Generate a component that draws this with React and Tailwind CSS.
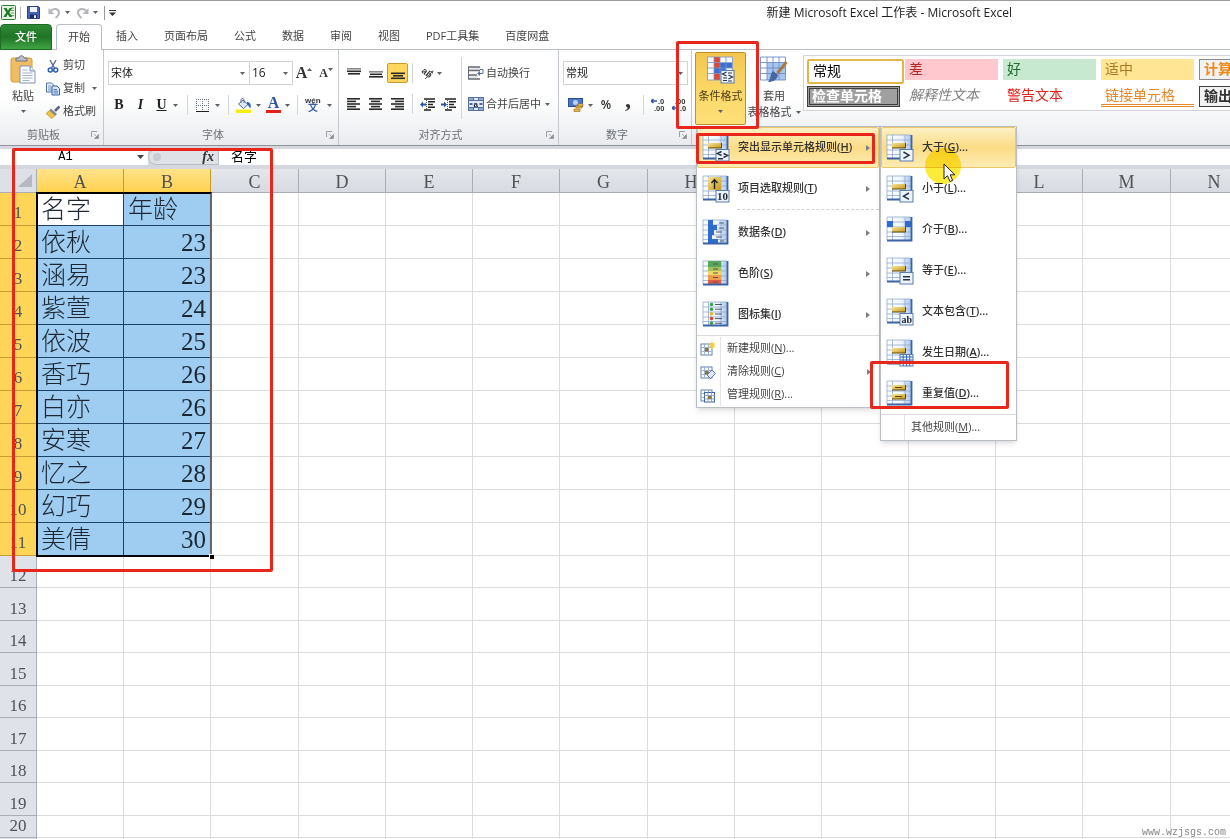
import React, { useState } from 'react';
import clsx from 'clsx';

const people = [
    ['依秋', 23],
    ['涵易', 23],
    ['紫萱', 24],
    ['依波', 25],
    ['香巧', 26],
    ['白亦', 26],
    ['安寒', 27],
    ['忆之', 28],
    ['幻巧', 29],
    ['美倩', 30],
];

const columns = 'ABCDEFGHIJKLMNOPQRST'.split('');
const wideColumns = ['C', 'G', 'M'];
const rowCount = 40;
const tabs = ['插入', '页面布局', '公式', '数据', '审阅', '视图', 'PDF工具集', '百度网盘'];

/* ---------- small shared pieces ---------- */

function Caret({ className }) {
    return (
        <svg viewBox="0 0 5 3" className={clsx('w-[5px] h-[3px] shrink-0', className)} aria-hidden="true">
            <path d="M0 0h5L2.5 3z" fill="#5c5f66" />
        </svg>
    );
}

function Divider() {
    return <span className="w-px h-5 mx-1 bg-[#d3d6db] shrink-0" />;
}

function Launcher() {
    return (
        <button type="button" aria-label="更多" className="w-2 h-2">
            <svg viewBox="0 0 8 8" className="w-2 h-2">
                <path d="M.5 6V.5H6" fill="none" stroke="#9a9ea6" />
                <path d="M3 3l3 3M7.5 3.500v4h-4z" fill="#8b9099" stroke="#8b9099" strokeWidth=".7" />
            </svg>
        </button>
    );
}

function Group({ label, className, children }) {
    return (
        <section className={clsx('flex flex-col shrink-0 border-r border-[#c5c9cf]', className)}>
            <div className="flex-1">{children}</div>
            <div className="flex items-center h-[22px] pr-1 pt-0.5 text-[#6d7178]">
                <span className="flex-1 pr-1 text-center">{label}</span>
                <Launcher />
            </div>
        </section>
    );
}

function Combo({ label, value, className }) {
    return (
        <label className={clsx('flex items-center h-6 border border-[#d0d3d8] bg-white', className)}>
            <select aria-label={label} defaultValue={value} className="flex-1 min-w-0 h-full pl-0.5 appearance-none outline-none text-[#222]">
                <option>{value}</option>
            </select>
            <Caret className="mr-1" />
        </label>
    );
}

function Tool({ label, className, children }) {
    return (
        <button type="button" aria-label={label} className={clsx('flex items-center justify-center h-5 shrink-0', className)}>
            {children}
        </button>
    );
}

/* ---------- ribbon icons ---------- */

function Lines({ rows }) {
    return (
        <svg viewBox="0 0 14 13" className="w-[14px] h-[13px]" aria-hidden="true">
            {rows.map(([x, y, w, color]) => (
                <rect key={y} x={x} y={y} width={w} height="1.6" fill={color || '#2b2b2b'} />
            ))}
        </svg>
    );
}

const vTop = [[0, 1, 14, '#888'], [0, 3.500, 14], [1, 6, 12]];
const vMiddle = [[0, 4, 14, '#888'], [1, 6.5, 12], [0, 9, 14]];
const vBottom = [[0, 5.500, 14], [2, 8, 10], [0, 10.500, 14]];
const hLeft = [[0, 0, 13], [0, 2.6, 9], [0, 5.2, 13], [0, 7.8, 9], [0, 10.4, 13]];
const hCenter = [[0, 0, 13], [2, 2.6, 9], [0, 5.2, 13], [2, 7.8, 9], [0, 10.4, 13]];
const hRight = [[0, 0, 13], [4, 2.6, 9], [0, 5.2, 13], [4, 7.8, 9], [0, 10.4, 13]];

function ExcelLogo() {
    return (
        <svg viewBox="0 0 15 15" className="w-[15px] h-[15px]">
            <rect x=".5" y=".5" width="14" height="14" rx="1" fill="#e4f1df" stroke="#2f7d32" />
            <path d="M10 3h3M10 5.500h3M10 8h3M10 10.500h3" stroke="#6aa868" />
            <path d="M2.500 3h3l1.500 2.800L8.600 3h2.700L8.400 7.400l3 4.600H8.500L6.800 9.200 5.200 12H2.300l3-4.500z" fill="#1f7a2b" />
        </svg>
    );
}

function SaveIcon() {
    return (
        <svg viewBox="0 0 13 13" className="w-[13px] h-[13px]">
            <path d="M.5.5h11l1 1v11H.5z" fill="#4763b8" stroke="#2c3f8c" />
            <path d="M3 1h7v5H3z" fill="#eef3fb" />
            <path d="M3 8.500h7V12H3z" fill="#1f2b5e" />
            <path d="M7 9.300h2V12H7z" fill="#e8edf8" />
        </svg>
    );
}

function UndoIcon({ flip }) {
    return (
        <svg viewBox="0 0 13 12" className={clsx('w-[13px] h-3', flip && '-scale-x-100')}>
            <path d="M2 4.500C5 .5 11 1.500 11 5.500c0 2.500-1.500 4-3.500 5.500" fill="none" stroke="#b4b6ba" strokeWidth="2" />
            <path d="M.5 1v6h6z" fill="#b4b6ba" />
        </svg>
    );
}

function PasteIcon() {
    return (
        <svg viewBox="0 0 26 29" className="w-[26px] h-[29px]">
            <rect x="1" y="3" width="21" height="24" rx="2" fill="#f0bd62" stroke="#d79a3c" />
            <path d="M6 6V3h3c0-3 5-3 5 0h3v3z" fill="#b9bec7" stroke="#70757e" />
            <path d="M10 11h10l5 5v12H10z" fill="#f8fbff" stroke="#8093b3" />
            <path d="M20 11v5h5" fill="#dce6f5" stroke="#8093b3" />
            <path d="M12.500 15h5M12.500 18h10M12.500 20.500h10M12.500 23h10M12.500 25.500h7" stroke="#a3b4cf" />
        </svg>
    );
}

function CutIcon() {
    return (
        <svg viewBox="0 0 14 14" className="w-[14px] h-[14px]">
            <path d="M4 1l4.500 8M10 1L5.500 9" stroke="#5c6f91" strokeWidth="1.500" />
            <circle cx="4.300" cy="11" r="2" fill="none" stroke="#2f5fb0" strokeWidth="1.500" />
            <circle cx="9.700" cy="11" r="2" fill="none" stroke="#2f5fb0" strokeWidth="1.500" />
        </svg>
    );
}

function CopyIcon() {
    return (
        <svg viewBox="0 0 14 14" className="w-[14px] h-[14px]">
            <path d="M.5 1h5l2.500 2.500V10H.5z" fill="#eef4fd" stroke="#4c6fae" />
            <path d="M2 4h3M2 6h4M2 8h4" stroke="#6c8dc5" />
            <path d="M6 4h5l2.500 2.500V13H6z" fill="#dbe8fa" stroke="#3560a8" />
            <path d="M7.500 7.500H11M7.500 9.200H12M7.500 11H12" stroke="#4d78bd" />
        </svg>
    );
}

function BrushIcon() {
    return (
        <svg viewBox="0 0 14 14" className="w-[14px] h-[14px]">
            <path d="M13.500 1.500L9 6" stroke="#5b6680" strokeWidth="2.600" />
            <path d="M5 3.500l6 5.500-2 2-6-5z" fill="#7d8aa6" />
            <path d="M3.500 5.500l5.500 5-3 3L0 8.500z" fill="#f0c648" stroke="#b98d25" strokeWidth=".7" />
        </svg>
    );
}

function BordersIcon() {
    return (
        <svg viewBox="0 0 13 13" className="w-[13px] h-[13px]">
            <path d="M.5 0v12M6.500 0v12M12.500 0v12M0 .5h13M0 6.500h13" stroke="#70747c" strokeDasharray="1 1" />
            <path d="M0 12.500h13" stroke="#222" />
        </svg>
    );
}

function FillIcon() {
    return (
        <svg viewBox="0 0 16 15" className="w-4 h-[15px]">
            <path d="M7 2l5 4.500L7.500 10.500 2.500 6z" fill="#dfe8f7" stroke="#5a6b8c" />
            <path d="M5 5V2c0-2 3-2 3 0v3" fill="none" stroke="#5a6b8c" />
            <path d="M11 4c3 0 4.500 2.500 3.500 6.500-1.500-1-1.500-3-3.500-4z" fill="#2f62b8" />
            <rect x="0" y="11.500" width="15" height="3.500" fill="#f7ec13" />
        </svg>
    );
}

function WrapIcon() {
    return (
        <svg viewBox="0 0 16 14" className="w-4 h-[14px]">
            <path d="M1 1h11v4H1zM1 9h9v4H1z" fill="#e6e8ec" />
            <path d="M0 1h12M0 4.500h12M0 9h9M0 13h12" stroke="#666b74" strokeWidth="1.400" />
            <path d="M.5 1v12" stroke="#666b74" />
            <path d="M12 3.500h3v4h-3.500" fill="none" stroke="#5370ab" />
            <path d="M9 7.500l3-2.500v5z" fill="#5370ab" />
        </svg>
    );
}

function MergeIcon() {
    return (
        <svg viewBox="0 0 16 14" className="w-4 h-[14px]">
            <rect x=".5" y=".5" width="15" height="13" fill="#dfe9f8" stroke="#5a7199" />
            <path d="M1 1h4.500v2.500H1zM10.500 1H15v2.500h-4.500zM1 10.500h4.500V13H1zM10.500 10.500H15V13h-4.500z" fill="#8fa8d0" />
            <path d="M.5 3.500h15M.5 10.500h15M5.500.5v3M10.500.5v3M5.500 10.500v3M10.500 10.500v3" stroke="#5a7199" />
            <path d="M1.500 7h3M11.500 7h3" stroke="#1f3f86" strokeWidth="1.500" />
            <text x="5.500" y="9.500" fontSize="8" fontWeight="bold" fontFamily="Liberation Sans, sans-serif" fill="#223">a</text>
        </svg>
    );
}

function IndentIcon({ inward }) {
    return (
        <svg viewBox="0 0 15 13" className="w-[15px] h-[13px]">
            <path d="M4 1h11M8 3.800h7M8 6.500h5M8 9.200h7M4 12h7" stroke="#222" strokeWidth="1.600" />
            <path d="M6.500 0v13" stroke="#555" strokeDasharray="1 1" />
            <path d={inward ? 'M0 5.500h3V3.500l3 3-3 3v-2H0z' : 'M6 5.500H3V3.500l-3 3 3 3v-2h3z'} fill="#2c56a8" />
        </svg>
    );
}

function OrientIcon() {
    return (
        <svg viewBox="0 0 15 14" className="w-[15px] h-[14px]">
            <text x="1" y="8" fontSize="9" fontFamily="Liberation Sans, sans-serif" fontWeight="bold" fill="#333" transform="rotate(40 4 7)">ab</text>
            <path d="M5 13l7-7" stroke="#555" />
            <path d="M13.500 4.500l-3.500 1 2.500 2.500z" fill="#555" />
        </svg>
    );
}

function MoneyIcon() {
    return (
        <svg viewBox="0 0 16 16" className="w-4 h-4">
            <rect x=".5" y="1.500" width="14" height="8" fill="#4c78c6" stroke="#2c4f96" />
            <ellipse cx="7.500" cy="5.500" rx="2.500" ry="2.500" fill="#bcd1f2" />
            <path d="M8 9h6v2H8zM6 12h6v2.500H6z" fill="#e9b54c" stroke="#a8761e" strokeWidth=".7" />
            <path d="M10 7h5v2h-5z" fill="#f2cb6d" stroke="#a8761e" strokeWidth=".7" />
        </svg>
    );
}

function DecimalIcon({ less }) {
    return (
        <svg viewBox="0 0 16 14" className="w-4 h-[14px]" fontFamily="Liberation Sans, sans-serif" fontWeight="bold" fontSize="7.500">
            <path d={less ? 'M0 10h6M0 10l2.500-2M0 10l2.500 2' : 'M6 3H0M0 3l2.500-2M0 3l2.500 2'} stroke="#2c56a8" strokeWidth="1.400" />
            <text x={less ? 3 : 7} y="6" fill="#333">{less ? '.00' : '.0'}</text>
            <text x={less ? 8 : 3} y="13" fill="#333">{less ? '.0' : '.00'}</text>
        </svg>
    );
}

/* ---------- menu icons, all built on the same little sheet ---------- */

function Sheet({ children, badge }) {
    return (
        <svg viewBox="0 0 28 28" className="w-7 h-7 shrink-0" aria-hidden="true">
            <defs>
                <linearGradient id="sheetEdge" x1="0" x2="1">
                    <stop offset="0" stopColor="#ffffff" />
                    <stop offset="0.6" stopColor="#f0f5fd" />
                    <stop offset="1" stopColor="#a9c6ef" />
                </linearGradient>
                <linearGradient id="gold" x1="0" x2="1" y2="1">
                    <stop offset="0" stopColor="#f6e39a" />
                    <stop offset="1" stopColor="#c99a1c" />
                </linearGradient>
            </defs>
            <rect x="1" y="1" width="24" height="23" fill="url(#sheetEdge)" />
            <path d="M1 6h24M1 11h24M1 16h24M1 20.500h24M6.500 1v23M19 1v23M1 1v23M1 1h24" stroke="#93aacb" strokeWidth=".8" />
            {children}
            <path d="M25.500 1v23.500H1" fill="none" stroke="#3c63a6" strokeWidth="1.800" />
            {badge && (
                <g>
                    <rect x="14" y="15.500" width="13" height="11.500" fill="#eef4fc" stroke="#5b7cb0" />
                    {badge}
                </g>
            )}
        </svg>
    );
}

function GoldBar({ y = 9 }) {
    return (
        <g>
            <path d={`M6 ${y}h13v5H6z`} fill="url(#gold)" />
            <path d={`M6 ${y + 5}h13.500V${y}`} fill="none" stroke="#5d4a12" />
        </g>
    );
}

function Sign({ d }) {
    return <path d={d} fill="none" stroke="#26324c" strokeWidth="1.500" />;
}

const signs = {
    both: 'M19.500 17.500l-4 2 4 2M21.500 19.500l4 2-4 2M16 24.700h5',
    greater: 'M17.500 18l5.500 3.200-5.500 3.200',
    less: 'M23 18l-5.500 3.200L23 24.400',
    equal: 'M17 19.700h7M17 22.800h7',
};

const TopIcon = () => (
    <Sheet badge={<text x="15" y="25" fontSize="11" fontWeight="bold" fontFamily="Liberation Serif, serif" fill="#1d2435">10</text>}>
        <path d="M6 2h13v13H6z" fill="url(#gold)" />
        <path d="M12.500 14V5M9.500 8l3-3.500 3 3.500" fill="none" stroke="#222" strokeWidth="1.400" />
    </Sheet>
);

const BarsIcon = () => (
    <Sheet>
        <path d="M6 1h5v5h-5zM6 6h9v5H6zM6 11h6v5H6zM6 16h4v4H6zM6 20h10v4H6z" fill="#2f6cd0" />
        <path d="M17 4h5M17 9h5M14 13h6M14 18h6M18 22h4" stroke="#4d5a70" />
    </Sheet>
);

const ScaleIcon = () => (
    <Sheet>
        <rect x="6" y="1" width="13" height="6" fill="#5aa55c" />
        <rect x="6" y="7" width="13" height="4" fill="#a4c25c" />
        <rect x="6" y="11" width="13" height="4" fill="#f1d765" />
        <rect x="6" y="15" width="13" height="5" fill="#ee9c4c" />
        <rect x="6" y="20" width="13" height="4" fill="#df5c3e" />
        <path d="M11 4h5M11 9h5M11 13h5M11 17.500h5M11 22h5" stroke="#555" />
    </Sheet>
);

const SetIcon = () => (
    <Sheet>
        {['#37a34a', '#37a34a', '#e9b82c', '#e0492f', '#37a34a'].map((color, i) => (
            <circle key={i} cx="9.500" cy={3.5 + i * 4.7} r="1.800" fill={color} />
        ))}
        <path d="M13 3.500h7M13 8.200h7M13 13h7M13 17.600h7M13 22.200h7" stroke="#4d5a70" />
    </Sheet>
);

const BetweenIcon = () => (
    <Sheet>
        <path d="M1 5h6v6H1zM19 5h6v6h-6z" fill="#2f6cd0" />
        <GoldBar y={11} />
    </Sheet>
);

const DateIcon = () => (
    <Sheet badge={<path d="M14 18h13M14 21h13M14 24h13M17.200 16v11M20.500 16v11M23.700 16v11" stroke="#3f66b5" />}>
        <GoldBar />
    </Sheet>
);

const DuplicateIcon = () => (
    <Sheet>
        <GoldBar y={5} />
        <GoldBar y={14} />
        <path d="M9 7.500h7M9 16.500h7" stroke="#5d4a12" />
    </Sheet>
);

const CompareIcon = ({ sign }) => (
    <Sheet badge={<Sign d={signs[sign]} />}>
        <GoldBar />
    </Sheet>
);

const TextIcon = () => (
    <Sheet badge={<text x="15.500" y="24.500" fontSize="10" fontFamily="Liberation Serif, serif" fontWeight="bold" fill="#1d2435">ab</text>}>
        <GoldBar />
    </Sheet>
);

function RuleIcon({ kind }) {
    return (
        <svg viewBox="0 0 16 16" className="w-4 h-4 shrink-0" aria-hidden="true">
            <rect x="1" y="3" width="11" height="11" fill="#fff" stroke="#6180b4" />
            <path d="M1 6.500h11M1 10.500h11M4.500 3v11M8.500 3v11" stroke="#9db3d6" />
            <rect x="5" y="7" width="3.500" height="3.500" fill="#8a7430" />
            {kind === 'new' && <path d="M12 0l1 2.500 2.500-.5-1.500 2.500 1.500 2-2.500-.3L12 8.500l-1-2.300-2.500.3 1.500-2L8.500 2l2.500.5z" fill="#f4cd3b" />}
            {kind === 'clear' && <path d="M7 11l5-5 3.500 3.500-5 5z" fill="#dfe8f6" stroke="#5c77a8" />}
            {kind === 'manage' && (
                <g>
                    <rect x="4.500" y="5.500" width="10" height="9.500" fill="#fff" stroke="#3f62a5" />
                    <path d="M4.500 8.500h10M4.500 12h10M8 5.500v9.500M11.500 5.500v9.500" stroke="#8ea8d2" />
                    <rect x="8" y="9" width="3.500" height="3" fill="#8a7430" />
                </g>
            )}
        </svg>
    );
}

/* ---------- menus ---------- */

const ruleMenu = [
    { text: '突出显示单元格规则', hotkey: 'H', icon: <CompareIcon sign="both" /> },
    { text: '项目选取规则', hotkey: 'T', icon: <TopIcon /> },
    { text: '数据条', hotkey: 'D', icon: <BarsIcon /> },
    { text: '色阶', hotkey: 'S', icon: <ScaleIcon /> },
    { text: '图标集', hotkey: 'I', icon: <SetIcon /> },
];

const highlightMenu = [
    { text: '大于', hotkey: 'G', icon: <CompareIcon sign="greater" /> },
    { text: '小于', hotkey: 'L', icon: <CompareIcon sign="less" /> },
    { text: '介于', hotkey: 'B', icon: <BetweenIcon /> },
    { text: '等于', hotkey: 'E', icon: <CompareIcon sign="equal" /> },
    { text: '文本包含', hotkey: 'T', icon: <TextIcon /> },
    { text: '发生日期', hotkey: 'A', icon: <DateIcon /> },
    { text: '重复值', hotkey: 'D', icon: <DuplicateIcon /> },
];

function ItemText({ text, hotkey, dots, strong }) {
    return (
        <span className="whitespace-nowrap">
            {text}
            <span className={clsx(strong && 'font-semibold')}>(<u>{hotkey}</u>){dots && '...'}</span>
        </span>
    );
}

function RightArrow() {
    return (
        <svg viewBox="0 0 4 6" className="w-1 h-1.5 ml-auto shrink-0" aria-hidden="true">
            <path d="M0 0l4 3-4 3z" fill="#7b7e85" />
        </svg>
    );
}

function BigItem({ item, active, dots, arrow }) {
    return (
        <button
            type="button"
            role="menuitem"
            className={clsx(
                'flex items-center w-full h-[41px] pl-1 pr-2 gap-2 border rounded-xs font-medium text-[#333]',
                active ? 'bg-linear-to-b from-[#fdf0c4] via-[#fbdc84] to-[#fdecb4] border-[#ecc766]' : 'border-transparent'
            )}
        >
            {item.icon}
            <ItemText text={item.text} hotkey={item.hotkey} dots={dots} strong />
            {arrow && <RightArrow />}
        </button>
    );
}

function SmallItem({ text, hotkey, kind, dots, arrow }) {
    return (
        <button type="button" role="menuitem" className="flex items-center w-full h-[23px] pl-[3px] pr-2 text-[#444]">
            <RuleIcon kind={kind} />
            <span className="w-px h-full ml-1 mr-1.5 bg-[#e2e4e7]" />
            <ItemText text={text} hotkey={hotkey} dots={dots} />
            {arrow && <RightArrow />}
        </button>
    );
}

function FormatMenus() {
    return (
        <div className="absolute left-0 top-full z-20 flex items-start mt-px ml-px">
            <div role="menu" className="w-[184px] bg-white border border-[#b9bdc4] shadow-md">
                <BigItem item={ruleMenu[0]} active arrow />
                <BigItem item={ruleMenu[1]} arrow />
                <hr className="ml-10 mb-0.5 border-t border-dashed border-[#cfd2d6]" />
                {ruleMenu.slice(2).map((item) => (
                    <BigItem key={item.hotkey} item={item} arrow />
                ))}
                <div className="py-px border-t border-[#d9dbdf]">
                    <SmallItem text="新建规则" hotkey="N" kind="new" dots />
                    <SmallItem text="清除规则" hotkey="C" kind="clear" arrow />
                    <SmallItem text="管理规则" hotkey="R" kind="manage" dots />
                </div>
            </div>
            <div role="menu" className="w-[137px] bg-white border border-[#b9bdc4] shadow-md">
                {highlightMenu.map((item, i) => (
                    <BigItem key={item.hotkey} item={item} active={i === 0} dots />
                ))}
                <button type="button" role="menuitem" className="flex items-center w-full h-[26px] border-t border-[#d9dbdf] text-[#444]">
                    <span className="w-6 h-full mr-1.5 border-r border-[#e2e4e7]" />
                    <ItemText text="其他规则" hotkey="M" dots />
                </button>
            </div>
        </div>
    );
}

/* ---------- window parts ---------- */

function TitleBar() {
    return (
        <header className="flex items-center h-6 pl-px shrink-0 border-t border-[#9b9b9b]">
            <ExcelLogo />
            <span className="w-px h-3 ml-1 mr-1.5 bg-[#bbb]" />
            <Tool label="保存"><SaveIcon /></Tool>
            <Tool label="撤消" className="ml-2 gap-1"><UndoIcon /><Caret /></Tool>
            <Tool label="恢复" className="ml-1.5 gap-1"><UndoIcon flip /><Caret /></Tool>
            <span className="w-px h-3.5 ml-1.5 mr-1 bg-[#999]" />
            <Tool label="自定义快速访问工具栏">
                <svg viewBox="0 0 7 6" className="w-[7px] h-1.5"><path d="M0 0h7v1H0zM0 2.500h7L3.500 6z" fill="#333" /></svg>
            </Tool>
            <h1 className="ml-auto mr-[218px] text-xs text-[#222] whitespace-nowrap">新建 Microsoft Excel 工作表 - Microsoft Excel</h1>
        </header>
    );
}

function TabBar() {
    return (
        <nav className="flex h-[26px] shrink-0 border-b border-[#b9bdc4] text-[#444] whitespace-nowrap">
            <button type="button" className="w-13 -mb-px rounded-t-sm border border-[#1d6b22] bg-linear-to-b from-[#2f8a35] via-[#1f7426] to-[#3fa544] text-white font-medium">文件</button>
            <button type="button" className="w-[46px] ml-1 mr-px -mb-px rounded-t-sm border border-b-0 border-[#b9bdc4] bg-white">开始</button>
            {tabs.map((tab) => (
                <button type="button" key={tab} className="px-[13px]">{tab}</button>
            ))}
        </nav>
    );
}

function ClipboardGroup() {
    return (
        <Group label="剪贴板" className="w-[104px]">
            <div className="flex pt-1">
                <button type="button" className="flex flex-col items-center w-[46px] pt-px text-[#444]">
                    <PasteIcon />
                    <span className="mt-1 leading-4">粘贴</span>
                    <Caret className="mt-1.5" />
                </button>
                <div className="flex flex-col text-[#444]">
                    <button type="button" className="flex items-center gap-[3px] h-[23px]"><CutIcon />剪切</button>
                    <button type="button" className="flex items-center gap-[3px] h-[23px]"><CopyIcon />复制<Caret className="ml-1" /></button>
                    <button type="button" className="flex items-center gap-[3px] h-[23px]"><BrushIcon />格式刷</button>
                </div>
            </div>
        </Group>
    );
}

function FontGroup() {
    return (
        <Group label="字体" className="w-[235px]">
            <div className="flex items-center h-8 mt-[7px] pl-1">
                <Combo label="字体" value="宋体" className="w-[142px]" />
                <Combo label="字号" value="16" className="w-11 -ml-px text-xs" />
                <Tool label="增大字号" className="w-[22px] font-[Liberation_Serif] font-bold text-base text-[#333]">A<Caret className="-mt-2 rotate-180" /></Tool>
                <Tool label="减小字号" className="w-[22px] font-[Liberation_Serif] font-bold text-xs text-[#333]">A<Caret className="-mt-2" /></Tool>
            </div>
            <div className="flex items-center h-8 pl-1 font-[Liberation_Serif] text-sm text-[#222]">
                <Tool label="加粗" className="w-[22px] font-bold">B</Tool>
                <Tool label="倾斜" className="w-[21px] font-bold italic">I</Tool>
                <Tool label="下划线" className="w-8 gap-1.5 font-bold"><u>U</u><Caret /></Tool>
                <Divider />
                <Tool label="边框" className="w-8 gap-1.5"><BordersIcon /><Caret /></Tool>
                <Divider />
                <Tool label="填充颜色" className="w-[30px] gap-1"><FillIcon /><Caret /></Tool>
                <Tool label="字体颜色" className="w-[30px] gap-1">
                    <span className="w-[15px] h-4 border-b-[3px] border-[#e3231b] text-base leading-3 font-bold text-[#2f559e]">A</span>
                    <Caret />
                </Tool>
                <Divider />
                <Tool label="拼音" className="w-8 gap-1.5">
                    <svg viewBox="0 0 16 18" className="w-4 h-[18px]">
                        <text x="0" y="7" fontSize="8" fontWeight="bold" fontFamily="Liberation Sans, sans-serif" fill="#333">wén</text>
                        <text x="3" y="15" fontSize="10" fontFamily="Noto Sans CJK SC, sans-serif" fontWeight="bold" fill="#3e5fa8">文</text>
                    </svg>
                    <Caret />
                </Tool>
            </div>
        </Group>
    );
}

function AlignGroup() {
    return (
        <Group label="对齐方式" className="w-[220px]">
            <div className="flex pt-[7px] pl-1">
                <div className="w-[119px] border-r border-[#d3d6db]">
                    <div className="flex items-center h-8">
                        <Tool label="顶端对齐" className="w-[22px]"><Lines rows={vTop} /></Tool>
                        <Tool label="垂直居中" className="w-[22px]"><Lines rows={vMiddle} /></Tool>
                        <Tool label="底端对齐" className="w-[21px] rounded-xs border border-[#c9992e] bg-[#ffd75e]"><Lines rows={vBottom} /></Tool>
                        <Divider />
                        <Tool label="方向" className="w-7 gap-0.5"><OrientIcon /><Caret /></Tool>
                    </div>
                    <div className="flex items-center h-[30px]">
                        <Tool label="左对齐" className="w-[22px]"><Lines rows={hLeft} /></Tool>
                        <Tool label="居中" className="w-[22px]"><Lines rows={hCenter} /></Tool>
                        <Tool label="右对齐" className="w-[21px]"><Lines rows={hRight} /></Tool>
                        <Divider />
                        <Tool label="减少缩进量" className="w-[21px]"><IndentIcon /></Tool>
                        <Tool label="增加缩进量" className="w-[21px]"><IndentIcon inward /></Tool>
                    </div>
                </div>
                <div className="pl-1.5 text-[#444]">
                    <button type="button" className="flex items-center gap-0.5 h-8"><WrapIcon />自动换行</button>
                    <button type="button" className="flex items-center gap-0.5 h-[30px]"><MergeIcon />合并后居中<Caret className="ml-0.5" /></button>
                </div>
            </div>
        </Group>
    );
}

function NumberGroup() {
    return (
        <Group label="数字" className="w-[133px]">
            <div className="flex items-center h-8 mt-[7px] pl-1">
                <Combo label="数字格式" value="常规" className="w-[125px]" />
            </div>
            <div className="flex items-center h-8 pl-1.5 text-[#333]">
                <Tool label="会计数字格式" className="w-[30px] gap-1"><MoneyIcon /><Caret /></Tool>
                <Tool label="百分比样式" className="w-[22px] text-xs font-semibold">%</Tool>
                <Tool label="千位分隔样式" className="w-[22px] pb-3 font-[Liberation_Serif] text-2xl font-bold">,</Tool>
                <Divider />
                <Tool label="增加小数位数" className="w-[21px]"><DecimalIcon /></Tool>
                <Tool label="减少小数位数" className="w-[21px]"><DecimalIcon less /></Tool>
            </div>
        </Group>
    );
}

function StyleCell({ className, children }) {
    return (
        <button type="button" className={clsx('flex items-center w-[93px] h-[21px] m-0.5 text-sm leading-4 whitespace-nowrap', className)}>
            {children}
        </button>
    );
}

function StylesGroup() {
    const [open, setOpen] = useState(true);

    return (
        <section className="flex shrink-0 items-start pt-0.5 pl-[3px]">
            <div className="relative">
                <button
                    type="button"
                    aria-expanded={open}
                    onClick={() => setOpen(!open)}
                    className="flex flex-col items-center w-[51px] h-[73px] pt-[3px] rounded-xs border border-[#c08f2c] bg-linear-to-b from-[#f3c64f] via-[#fbd766] to-[#fee07a] text-[#4c3e1c] whitespace-nowrap"
                >
                    <svg viewBox="0 0 28 28" className="w-7 h-7">
                        <path d="M.5 1h25v23H.5z" fill="#f4f8ff" />
                        <path d="M7 1h6v23H7z" fill="#e2472f" />
                        <path d="M13 7h12v5H13zM7 12h12v5H7z" fill="#3d6ed1" />
                        <path d="M.5 1v23M7 1v23M13 1v23M19 1v23M25.500 1v23M.5 1h25M.5 6.500h25M.5 12h25M.5 17.500h25M.5 24h25" stroke="#7b97c6" strokeWidth=".8" />
                        <rect x="14" y="14.500" width="13" height="12.500" fill="#eef4fc" stroke="#5b7cb0" />
                        <path d="M19.500 16l-4 2 4 2M16 22h4M16 24.500h4M21.500 19l4 2-4 2M21 25h4M21 17h4" fill="none" stroke="#26324c" strokeWidth="1.200" />
                    </svg>
                    <span className="mt-1 leading-4">条件格式</span>
                    <Caret className="mt-1.5" />
                </button>
                {open && <FormatMenus />}
            </div>
            <button type="button" className="flex flex-col items-center w-[56px] pt-1 text-[#444] whitespace-nowrap">
                <svg viewBox="0 0 28 28" className="w-7 h-7">
                    <path d="M.5 1h25v23H.5z" fill="#fff" />
                    <path d="M7 6.500h18.500V24H7z" fill="#a9c6f1" />
                    <path d="M.5 1v23M7 1v23M13 1v23M19 1v23M25.500 1v23M.5 1h25M.5 6.500h25M.5 12h25M.5 17.500h25M.5 24h25" stroke="#6d8dc4" strokeWidth=".9" />
                    <path d="M26.500 6l-9 11" stroke="#a77b46" strokeWidth="3" />
                    <path d="M13 15l5 4c-1 5-5 7-10 7 3-3 2-9 5-11z" fill="#46679f" />
                </svg>
                <span className="mt-1 leading-4">套用</span>
                <span className="flex items-center gap-1 leading-4">表格格式<Caret /></span>
            </button>
            <div className="grid grid-cols-[98px_98px_98px_98px_98px] grid-rows-[27px_25px] mt-[3px] ml-px p-px border border-[#d0d3d8] bg-white">
                <StyleCell className="w-[97px] h-[25px] m-0 pl-1 pb-0.5 rounded-xs border-2 border-[#e3b64b] text-black">常规</StyleCell>
                <StyleCell className="pl-1 pb-0.5 bg-[#ffc7ce] text-[#b02a22]">差</StyleCell>
                <StyleCell className="pl-1 pb-0.5 bg-[#c6e9cf] text-[#1f6b2b]">好</StyleCell>
                <StyleCell className="pl-1 pb-0.5 bg-[#ffe594] text-[#a8782a]">适中</StyleCell>
                <StyleCell className="pl-1 pb-0.5 border border-[#8a8a8a] bg-[#f2f2f2] font-bold text-[#ee8a1d]">计算</StyleCell>
                <StyleCell className="pl-0.5 pb-0.5 border-3 border-double border-[#3f3f3f] bg-[#a0a0a0] font-bold text-white">检查单元格</StyleCell>
                <StyleCell className="pl-1 pb-1 italic text-[#7f7f7f]">解释性文本</StyleCell>
                <StyleCell className="pl-1 pb-1 text-[#e3231b]">警告文本</StyleCell>
                <StyleCell className="pl-1 border-b-3 border-double border-[#e5892b] text-[#e5892b]">链接单元格</StyleCell>
                <StyleCell className="pl-1 pb-0.5 border border-[#3f3f3f] bg-[#f2f2f2] font-bold text-[#333]">输出</StyleCell>
            </div>
        </section>
    );
}

function FormulaBar() {
    return (
        <div className="flex h-6 shrink-0 pt-[3px] pb-1 bg-[#d5d8de] border-t border-[#8d929b]">
            <label className="flex items-center w-[148px] pr-1 bg-white">
                <input aria-label="名称框" defaultValue="A1" className="flex-1 min-w-0 pr-1.5 text-center outline-none font-[Liberation_Mono] text-xs text-black" />
                <svg viewBox="0 0 7 4" className="w-[7px] h-1"><path d="M0 0h7L3.500 4z" fill="#444" /></svg>
            </label>
            <div className="flex items-center w-[71px] pl-1 pr-1 rounded-l-full border border-[#b9bdc4] bg-[#dfe2e7]">
                <span className="w-2 h-2 rounded-full bg-[#c8ccd3]" />
                <button type="button" className="ml-auto font-[Liberation_Serif] text-sm leading-4 font-bold italic text-[#333]">fx</button>
            </div>
            <input aria-label="编辑栏" defaultValue="名字" className="flex-1 min-w-0 pl-3 bg-white outline-none text-[13px] text-black" />
        </div>
    );
}

function cellValue(row, col) {
    if (row === 1) return ['名字', '年龄'][col];
    return people[row - 2][col];
}

function rowHeight(row) {
    if (row === 20) return 'h-[22px]';
    return row > 11 && row % 2 === 0 ? 'h-8' : 'h-[33px]';
}

function SheetGrid() {
    return (
        <div className="relative flex-1 min-h-0 overflow-hidden">
            <table className="table-fixed w-px border-separate border-spacing-0 font-[Liberation_Serif,Noto_Sans_CJK_SC]">
                <colgroup>
                    <col className="w-[37px]" />
                    {columns.map((name) => (
                        <col key={name} className={wideColumns.includes(name) ? 'w-[88px]' : 'w-[87px]'} />
                    ))}
                </colgroup>
                <thead>
                    <tr className="h-6 text-lg leading-5 text-[#505256]">
                        <td className="p-0 border-r border-b border-[#a9adb5] bg-[#dde0e6]">
                            <svg viewBox="0 0 14 13" className="w-[14px] h-[13px] ml-auto mr-1"><path d="M14 0v13H0z" fill="#b4b8c0" /></svg>
                        </td>
                        {columns.map((name, i) => (
                            <th
                                key={name}
                                scope="col"
                                className={clsx(
                                    'px-0 pt-0.5 pb-0 border-r border-b font-normal',
                                    i < 2 ? 'border-[#c79a33] bg-linear-to-b from-[#ffe388] to-[#ffd24c]' : 'border-[#a9adb5] bg-linear-to-b from-[#e3e6eb] to-[#d8dbe1]'
                                )}
                            >
                                {name}
                            </th>
                        ))}
                    </tr>
                </thead>
                <tbody>
                    {Array.from({ length: rowCount }, (_, r) => r + 1).map((row) => (
                        <tr key={row} className={rowHeight(row)}>
                            <th
                                scope="row"
                                className={clsx(
                                    'px-0 pt-0 border-r border-b align-bottom font-normal text-[17px] leading-5 text-[#505256]',
                                    row < 12 ? 'pb-0.5 border-[#c79a33] bg-[#ffd558]' : 'pb-px border-[#a9adb5] bg-[#dfe2e9]'
                                )}
                            >
                                {row}
                            </th>
                            {columns.map((name, col) =>
                                row < 12 && col < 2 ? (
                                    <td
                                        key={name}
                                        className={clsx(
                                            'pt-0.5 pb-0 px-1 border-r border-b border-[#1d4268] text-[25px] leading-6 font-light text-[#1c2733]',
                                            row === 1 && col === 0 ? 'bg-white' : 'bg-[#9fccf1]',
                                            row > 1 && col === 1 && 'text-right'
                                        )}
                                    >
                                        {cellValue(row, col)}
                                    </td>
                                ) : (
                                    <td key={name} className="p-0 border-r border-b border-[#dcdcdc] bg-white" />
                                )
                            )}
                        </tr>
                    ))}
                </tbody>
            </table>
            {/* selection frame round A1:B11 */}
            <div className="absolute left-9 top-[23px] w-[176px] h-[365px] border-2 border-black border-r-[#666]">
                <span className="absolute -right-1 -bottom-1 w-[5px] h-[5px] bg-black border-l border-t border-white" />
            </div>
        </div>
    );
}

function Mark({ className }) {
    return <div className={clsx('absolute z-30 border-3 border-[#e8261c] rounded-xs pointer-events-none', className)} />;
}

function App() {
    return (
        <div className="relative flex flex-col h-screen overflow-hidden bg-white font-[Open_Sans,Noto_Sans_CJK_SC,sans-serif] text-[11px]">
            <TitleBar />
            <TabBar />
            <div className="flex h-[95px] shrink-0 bg-linear-to-b from-white from-50% to-[#e9ebef]">
                <ClipboardGroup />
                <FontGroup />
                <AlignGroup />
                <NumberGroup />
                <StylesGroup />
            </div>
            <FormulaBar />
            <SheetGrid />

            {/* tutorial marks */}
            <Mark className="left-[676px] top-[41px] w-[83px] h-[88px]" />
            <Mark className="left-[696px] top-[133px] w-[179px] h-[31px]" />
            <Mark className="left-[870px] top-[361px] w-[139px] h-12" />
            <Mark className="left-3 top-[148px] w-[261px] h-[424px]" />

            <div className="absolute z-30 left-[925px] top-[148px] w-9 h-9 rounded-full bg-[#fbec3a] mix-blend-multiply pointer-events-none" />
            <svg viewBox="0 0 13 20" className="absolute z-30 left-[943px] top-[163px] w-[13px] h-5 pointer-events-none" aria-hidden="true">
                <path d="M1 1v15l3.500-3.300L7 18.500l2.600-1.100-2.400-5.600H12z" fill="#fff" stroke="#222" />
            </svg>

            <footer className="absolute right-1 bottom-0 font-[Liberation_Mono] text-[10px] leading-3 text-[#888]">www.wzjsgs.com</footer>
        </div>
    );
}

export default App;
